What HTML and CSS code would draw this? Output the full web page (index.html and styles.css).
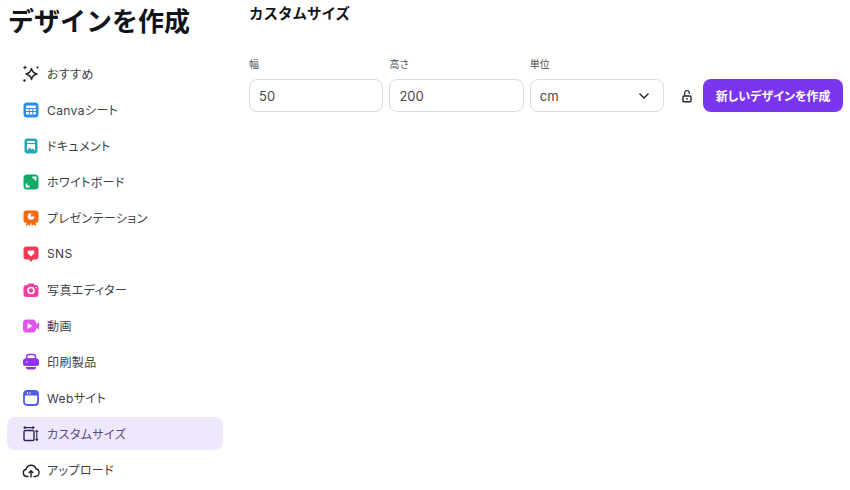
FILE: index.html
```html
<!DOCTYPE html>
<html lang="ja">
<head>
    <meta charset="UTF-8">
    <title>デザインを作成</title>
    <link rel="stylesheet" href="styles.css">
</head>
<body>
    <div class="layout">
        <aside class="sidebar">
            <h1>デザインを作成</h1>
            <nav class="menu">
                <a class="menu-item">
                    <svg class="icon" viewBox="0 0 18 18"><path d="M9.500 3.500c.7 3.400 1.900 4.700 5.500 5.500-3.600.8-4.800 2.100-5.500 5.500-.7-3.400-1.900-4.700-5.500-5.500 3.600-.8 4.800-2.100 5.500-5.500z" fill="none" stroke="#1f2329" stroke-width="1.300" stroke-linejoin="round"/><path d="M3 .8v3.400M1.300 2.500h3.400" stroke="#1f2329" stroke-width="1.100"/><circle cx="15.500" cy="2.500" r="1.100" fill="#1f2329"/><circle cx="2.500" cy="15.500" r="1.200" fill="#1f2329"/></svg>
                    おすすめ
                </a>
                <a class="menu-item">
                    <svg class="icon" viewBox="0 0 18 18"><rect x="1.500" y="1.500" width="15" height="15" rx="3.500" fill="#2b8cf0"/><rect x="4" y="4.500" width="10" height="9" rx="1" fill="#fff"/><path d="M4 7.500h10M4 10.500h10M7.300 7.500v6M10.700 7.500v6" stroke="#2b8cf0" stroke-width="1"/></svg>
                    Canvaシート
                </a>
                <a class="menu-item">
                    <svg class="icon" viewBox="0 0 18 18"><rect x="2.500" y="1.500" width="13" height="15" rx="3" fill="#25a5b8"/><rect x="5" y="4" width="8" height="10" rx="1" fill="#fff"/><path d="M5 6.500h8" stroke="#25a5b8" stroke-width="1.200"/><path d="M5 14l2.500-3.500 2 2 1.500-1 2 2.500z" fill="#25a5b8"/></svg>
                    ドキュメント
                </a>
                <a class="menu-item">
                    <svg class="icon" viewBox="0 0 18 18"><rect x="1.500" y="1.500" width="15" height="15" rx="3.500" fill="#12a865"/><path d="M10.500 4.500h3v3M7.500 13.500h-3v-3" fill="none" stroke="#fff" stroke-width="1.800"/></svg>
                    ホワイトボード
                </a>
                <a class="menu-item">
                    <svg class="icon" viewBox="0 0 18 18"><path d="M5 13l-1.500 4 3-1.500L8 17l1-3.500 1 3.500 1.500-1.500 3 1.500L13 13z" fill="#f26a12"/><rect x="1.500" y="1.500" width="15" height="12.500" rx="3" fill="#f26a12"/><circle cx="9" cy="7.500" r="3.300" fill="#fff"/><path d="M9 7.500V4.200A3.300 3.300 0 0 1 12.300 7.500z" fill="#f26a12"/></svg>
                    プレゼンテーション
                </a>
                <a class="menu-item">
                    <svg class="icon" viewBox="0 0 18 18"><path d="M4.500 1.500h9a3 3 0 0 1 3 3v7a3 3 0 0 1-3 3h-2.500L9 17l-2-2.500H4.500a3 3 0 0 1-3-3v-7a3 3 0 0 1 3-3z" fill="#f23a57"/><path d="M9 11.500L5.700 8.200a2 2 0 0 1 3.300-2.200 2 2 0 0 1 3.300 2.200z" fill="#fff"/></svg>
                    SNS
                </a>
                <a class="menu-item">
                    <svg class="icon" viewBox="0 0 18 18"><path d="M6.500 2.500h5l1 1.500h1a3 3 0 0 1 3 3v6a3 3 0 0 1-3 3h-9a3 3 0 0 1-3-3V7a3 3 0 0 1 3-3h1z" fill="#f23da0"/><circle cx="9" cy="9.500" r="3" fill="none" stroke="#fff" stroke-width="1.700"/><circle cx="14" cy="6.500" r=".8" fill="#fff"/></svg>
                    写真エディター
                </a>
                <a class="menu-item">
                    <svg class="icon" viewBox="0 0 18 18"><rect x="1" y="2.500" width="13" height="13" rx="3.500" fill="#e255f0"/><path d="M13 7.500l4-2v7l-4-2z" fill="#e255f0"/><path d="M5.500 6v6l5-3z" fill="#fff"/></svg>
                    動画
                </a>
                <a class="menu-item">
                    <svg class="icon" viewBox="0 0 18 18"><path d="M4.500 6V4a2.500 2.500 0 0 1 2.500-2.500h4A2.500 2.500 0 0 1 13.500 4v2z" fill="none" stroke="#9333e8" stroke-width="1.500"/><rect x="1" y="5.500" width="16" height="7.500" rx="2.500" fill="#9333e8"/><path d="M4 9h1.500" stroke="#fff" stroke-width="1.200"/><path d="M4 14h10v.5a2 2 0 0 1-2 2H6a2 2 0 0 1-2-2z" fill="#9333e8"/></svg>
                    印刷製品
                </a>
                <a class="menu-item">
                    <svg class="icon" viewBox="0 0 18 18"><rect x="2" y="2" width="14" height="14" rx="3" fill="#fff" stroke="#4f5be8" stroke-width="1.800"/><path d="M2 6.500V5a3 3 0 0 1 3-3h8a3 3 0 0 1 3 3v1.500z" fill="#4f5be8"/><path d="M5.500 3.200v2M8 3.200v2" stroke="#fff" stroke-width="1"/></svg>
                    Webサイト
                </a>
                <a class="menu-item active">
                    <svg class="icon" viewBox="0 0 18 18"><rect x="2" y="5.500" width="10" height="10" rx="1.200" fill="none" stroke="#2d2552" stroke-width="1.400"/><path d="M2 2.600h10M3.400 1.300L2 2.600l1.400 1.300M10.600 1.300L12 2.600l-1.400 1.300M14.800 5.500v10M13.500 6.900l1.300-1.400 1.300 1.400M13.500 14.100l1.300 1.400 1.300-1.400" fill="none" stroke="#2d2552" stroke-width="1.100"/></svg>
                    カスタムサイズ
                </a>
                <a class="menu-item">
                    <svg class="icon" viewBox="0 0 18 18"><path d="M6 15.500H4.800a3.700 3.700 0 0 1-.6-7.300 5 5 0 0 1 9.700-.4 3.900 3.900 0 0 1-.4 7.700H12" fill="none" stroke="#1f2329" stroke-width="1.400" stroke-linecap="round"/><path d="M9 16.500v-6.500M6.700 12L9 9.700 11.300 12" fill="none" stroke="#1f2329" stroke-width="1.400"/></svg>
                    アップロード
                </a>
            </nav>
        </aside>

        <main class="content">
            <h2>カスタムサイズ</h2>
            <form class="size-form">
                <div class="field">
                    <label>幅</label>
                    <div class="input">50</div>
                </div>
                <div class="field">
                    <label>高さ</label>
                    <div class="input">200</div>
                </div>
                <div class="field">
                    <label>単位</label>
                    <div class="input select">
                        cm
                        <svg class="chevron" viewBox="0 0 12 8"><path d="M1.500 1.500L6 6l4.500-4.500" fill="none" stroke="#1f2329" stroke-width="1.400"/></svg>
                    </div>
                </div>
                <svg class="lock" viewBox="0 0 12 14"><path d="M3.800 7V3.700a2.200 2.200 0 0 1 4.400 0V5" fill="none" stroke="#1f2329" stroke-width="1.200"/><rect x="2" y="7" width="8" height="5.800" rx="1" fill="none" stroke="#1f2329" stroke-width="1.400"/><circle cx="6" cy="9.900" r=".9" fill="#1f2329"/></svg>
                <button type="button" class="btn-primary">新しいデザインを作成</button>
            </form>
        </main>
    </div>
</body>
</html>
```

FILE: styles.css
```css
* {
    margin: 0;
    padding: 0;
    box-sizing: border-box;
    font-family: Inter, "Noto Sans CJK JP", sans-serif;
}

body {
    width: 850px;
    height: 490px;
    overflow: hidden;
    background-color: #ffffff;
    color: #1f2329;
}

.layout {
    display: flex;
    height: 490px;
}

.sidebar {
    width: 249px;
    padding-left: 7px;
    flex-shrink: 0;
}

h1 {
    font-size: 26px;
    font-weight: 700;
    line-height: 32px;
    margin: 6px 0 0 1px;
    color: #111418;
}

.menu {
    display: flex;
    flex-direction: column;
    gap: 3px;
    width: 216px;
    margin-top: 19px;
}

.menu-item {
    display: flex;
    align-items: center;
    gap: 7px;
    height: 33px;
    padding-left: 15px;
    border-radius: 8px;
    font-size: 12px;
    font-feature-settings: "palt";
    letter-spacing: 0.4px;
    color: #3c4148;
}

.menu-item.active {
    background-color: #efe8fc;
    color: #5a4d7e;
}

.icon {
    width: 18px;
    height: 18px;
    flex-shrink: 0;
}

.content {
    flex: 1;
}

h2 {
    font-size: 14.500px;
    font-weight: 700;
    line-height: 20px;
    margin-top: 4px;
    color: #111418;
}

.size-form {
    display: flex;
    align-items: flex-end;
    gap: 6px;
    margin-top: 33px;
}

.field {
    display: flex;
    flex-direction: column;
    gap: 8px;
    width: 134.400px;
}

.field label {
    font-size: 10px;
    line-height: 14px;
    color: #4a4f57;
}

.input {
    display: flex;
    align-items: center;
    justify-content: space-between;
    height: 33px;
    padding: 0 9px;
    border: 1px solid #d9dbde;
    border-radius: 8px;
    font-size: 13px;
    color: #444950;
}

.chevron {
    width: 12px;
    height: 8px;
    margin-right: 4px;
}

.lock {
    width: 12px;
    height: 14px;
    margin: 0 4px 9px 11px;
}

.btn-primary {
    width: 140px;
    height: 33px;
    border: none;
    border-radius: 8px;
    background-color: #7c35ee;
    color: #ffffff;
    font-size: 12px;
    font-feature-settings: "palt";
    font-weight: 700;
}
```
